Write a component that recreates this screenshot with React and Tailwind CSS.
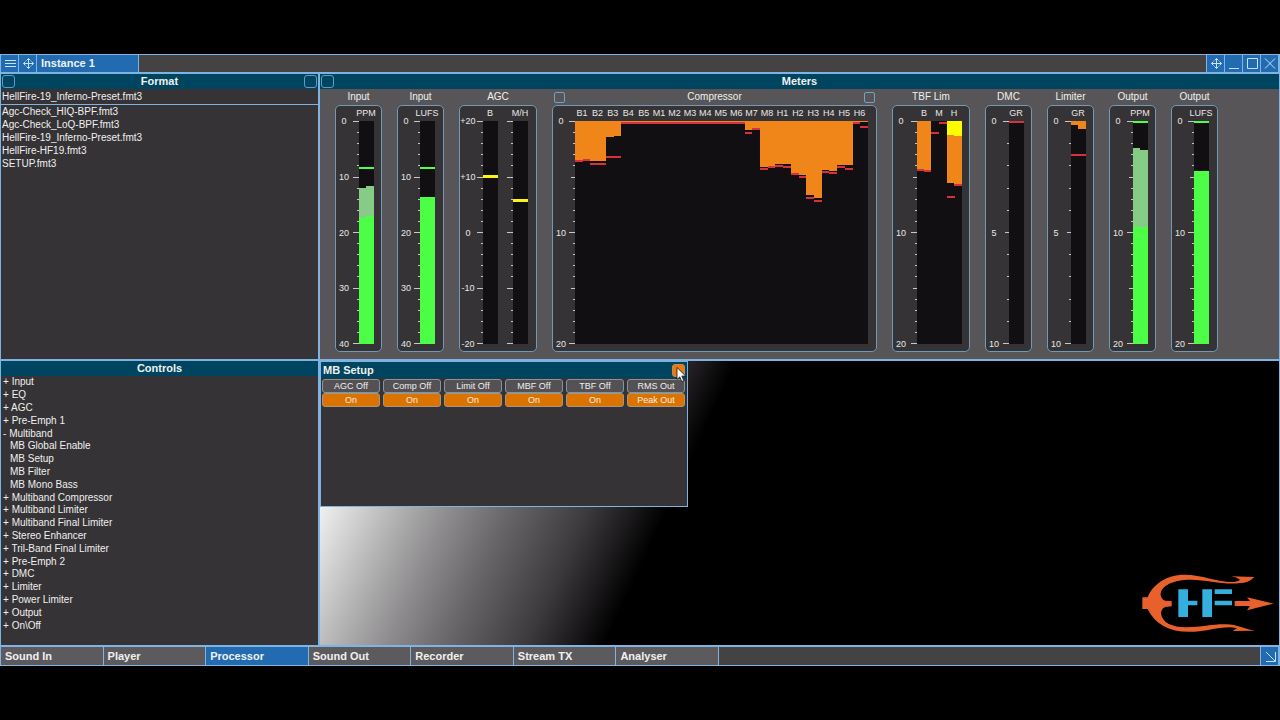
import React, { useState } from "react";

const ORANGE = "#f08519";
const RED = "#d8303c";
const GREEN = "#4cff46";
const PALE = "#86cc86";
const YELLOW = "#fdf31c";

const files = [
  "Agc-Check_HIQ-BPF.fmt3",
  "Agc-Check_LoQ-BPF.fmt3",
  "HellFire-19_Inferno-Preset.fmt3",
  "HellFire-HF19.fmt3",
  "SETUP.fmt3",
];

const controls = [
  { sign: "+", name: "Input" },
  { sign: "+", name: "EQ" },
  { sign: "+", name: "AGC" },
  { sign: "+", name: "Pre-Emph 1" },
  { sign: "-", name: "Multiband" },
  { name: "MB Global Enable" },
  { name: "MB Setup" },
  { name: "MB Filter" },
  { name: "MB Mono Bass" },
  { sign: "+", name: "Multiband Compressor" },
  { sign: "+", name: "Multiband Limiter" },
  { sign: "+", name: "Multiband Final Limiter" },
  { sign: "+", name: "Stereo Enhancer" },
  { sign: "+", name: "Tril-Band Final Limiter" },
  { sign: "+", name: "Pre-Emph 2" },
  { sign: "+", name: "DMC" },
  { sign: "+", name: "Limiter" },
  { sign: "+", name: "Power Limiter" },
  { sign: "+", name: "Output" },
  { sign: "+", name: "On\\Off" },
];

const tabs = ["Sound In", "Player", "Processor", "Sound Out", "Recorder", "Stream TX", "Analyser"];

const switches = [
  ["AGC Off", "On"],
  ["Comp Off", "On"],
  ["Limit Off", "On"],
  ["MBF Off", "On"],
  ["TBF Off", "On"],
  ["RMS Out", "Peak Out"],
];

// gain reduction and peak hold for the left and right channel of each band
const bands = [
  ["B1", 39, 39, 38, 38],
  ["B2", 40, 42, 40, 42],
  ["B3", 16, 35, 15, 35],
  ["B4", 1, 1, 1, 1],
  ["B5", 1, 1, 1, 1],
  ["M1", 1, 1, 1, 1],
  ["M2", 1, 1, 1, 1],
  ["M3", 1, 1, 1, 1],
  ["M4", 1, 1, 1, 1],
  ["M5", 1, 1, 1, 1],
  ["M6", 1, 1, 1, 1],
  ["M7", 9, 11, 7, 7],
  ["M8", 46, 47, 45, 45],
  ["H1", 43, 44, 43, 45],
  ["H2", 52, 52, 54, 55],
  ["H3", 74, 76, 77, 79],
  ["H4", 49, 50, 50, 51],
  ["H5", 44, 45, 44, 47],
  ["H6", 1, 1, 1, 5],
];
const BAND = 293 / 19;

const compressorBars = bands.flatMap(([, l, lPeak, r, rPeak], i) => [
  [i * BAND, 0, BAND / 2, l, ORANGE],
  [i * BAND + BAND / 2, 0, BAND / 2, r, ORANGE],
  [i * BAND, lPeak, BAND / 2, 2, RED],
  [i * BAND + BAND / 2, rPeak, BAND / 2, 2, RED],
]);

// bars: [x, y, width, height, colour], measured from the plot's top left corner
const meters = [
  {
    title: "Input", width: 47, scale: ["0", "10", "20", "30", "40"],
    plots: [{
      x: 23, width: 15, labels: [["PPM", 7]],
      bars: [[0, 46, 15, 2, GREEN], [0, 67, 7, 156, PALE], [7, 65, 8, 158, PALE], [0, 97, 7, 126, GREEN], [7, 95, 8, 128, GREEN]],
    }],
  },
  {
    title: "Input", width: 47, scale: ["0", "10", "20", "30", "40"],
    plots: [{ x: 22, width: 15, labels: [["LUFS", 7]], bars: [[0, 46, 15, 2, GREEN], [0, 76, 15, 147, GREEN]] }],
  },
  {
    title: "AGC", width: 78, scale: ["+20", "+10", "0", "-10", "-20"],
    plots: [
      { x: 23, width: 15, labels: [["B", 7]], bars: [[0, 54, 15, 3, YELLOW]] },
      { x: 53, width: 15, labels: [["M/H", 7]], bars: [[0, 78, 15, 3, YELLOW]] },
    ],
  },
  {
    title: "Compressor", width: 325, scale: ["0", "10", "20"], boxes: true,
    plots: [{
      x: 22, width: 293,
      labels: bands.map(([name], i) => [name, i * BAND + 7]),
      bars: compressorBars,
    }],
  },
  {
    title: "TBF Lim", width: 78, scale: ["0", "10", "20"],
    plots: [{
      x: 24, width: 45, labels: [["B", 7], ["M", 22], ["H", 37]],
      bars: [
        [0, 0, 7, 48, ORANGE], [7, 0, 7, 49, ORANGE], [0, 48, 7, 2, RED], [7, 49, 7, 2, RED],
        [14, 11, 8, 2, RED], [22, 1, 8, 2, RED],
        [30, 0, 7, 62, ORANGE], [37, 0, 8, 63, ORANGE], [30, 0, 7, 14, "#fdfd00"], [37, 0, 8, 15, "#fdfd00"],
        [37, 63, 8, 2, RED], [30, 75, 8, 2, RED],
      ],
    }],
  },
  {
    title: "DMC", width: 47, scale: ["0", "5", "10"], steps: 10,
    plots: [{ x: 23, width: 15, labels: [["GR", 7]], bars: [[0, 0, 15, 2, RED]] }],
  },
  {
    title: "Limiter", width: 47, scale: ["0", "5", "10"], steps: 10,
    plots: [{
      x: 23, width: 15, labels: [["GR", 7]],
      bars: [[0, 0, 7, 4, ORANGE], [7, 0, 8, 8, ORANGE], [0, 33, 15, 2, RED]],
    }],
  },
  {
    title: "Output", width: 47, scale: ["0", "10", "20"],
    plots: [{
      x: 23, width: 15, labels: [["PPM", 7]],
      bars: [[0, 0, 15, 2, GREEN], [0, 27, 7, 196, PALE], [7, 29, 8, 194, PALE], [0, 106, 15, 117, GREEN]],
    }],
  },
  {
    title: "Output", width: 47, scale: ["0", "10", "20"],
    plots: [{ x: 22, width: 15, labels: [["LUFS", 7]], bars: [[0, 0, 15, 2, GREEN], [0, 50, 15, 173, GREEN]] }],
  },
];

const TOP = 15;
const HEIGHT = 223;

function Meter({ title, width, scale, steps = 20, plots, boxes }) {
  const perLabel = steps / (scale.length - 1);
  const tickLength = (i) => {
    if (i % perLabel === 0) return steps === 10 && i === 5 ? 4 : 6;
    return steps === 20 && i % 5 === 0 ? 4 : 2;
  };

  return (
    <section className="flex shrink-0 flex-col" style={{ width }}>
      <div className="flex h-4 items-center justify-between px-[2px]">
        {boxes && <SquareButton label="Previous" />}
        <h3 className="flex-1 text-center text-[10px] leading-none whitespace-nowrap">{title}</h3>
        {boxes && <SquareButton label="Next" />}
      </div>
      <div className="rounded-[5px] border border-[#7299b5] bg-[#353335]">
        <svg className="block" width={width - 2} height="245" fontSize="9" fill="#e8e8e8" textAnchor="middle">
          {scale.map((label, i) => (
            <text key={label} x="8" y={TOP + 3 + (i * HEIGHT) / (scale.length - 1)}>
              {label}
            </text>
          ))}
          {plots.map((plot) => (
            <g key={plot.x} transform={`translate(${plot.x} 0)`}>
              {plot.labels.map(([label, x]) => (
                <text key={label} x={x} y="10">
                  {label}
                </text>
              ))}
              {Array.from({ length: steps + 1 }, (_, i) => (
                <rect
                  key={i}
                  x={-tickLength(i)}
                  y={TOP + Math.round((i * (HEIGHT - 1)) / steps)}
                  width={tickLength(i)}
                  height="1"
                  fill="#c8c8c8"
                />
              ))}
              <rect y={TOP} width={plot.width} height={HEIGHT} fill="#110f12" />
              <g shapeRendering="crispEdges">
                {plot.bars.map(([x, y, w, h, fill], i) => (
                  <rect key={i} x={x} y={TOP + y} width={w} height={h} fill={fill} />
                ))}
              </g>
            </g>
          ))}
        </svg>
      </div>
    </section>
  );
}

function SquareButton({ label }) {
  return (
    <button aria-label={label} className="size-[11px] shrink-0 rounded-[2px] border border-[#6fa3c8]" />
  );
}

function PanelHeader({ title, left, right }) {
  return (
    <div className="flex h-[15px] items-center bg-[#00455f] px-px">
      <div className="flex w-[13px]">{left && <HeaderButton label={`${title} left`} />}</div>
      <h2 className="flex-1 text-center text-[11px] leading-none font-bold">{title}</h2>
      <div className="flex w-[13px]">{right && <HeaderButton label={`${title} right`} />}</div>
    </div>
  );
}

function HeaderButton({ label }) {
  return <button aria-label={label} className="size-[13px] rounded-[3px] border border-[#5c9cc4]" />;
}

function BarButton({ label, children }) {
  return (
    <button
      aria-label={label}
      className="flex w-[18px] items-center justify-center border-r border-[#7fb4e2] bg-[#236bb1] text-[#c4e2fa]"
    >
      <svg className="h-[17px] w-4" viewBox="0 0 16 17" fill="none" stroke="currentColor">
        {children}
      </svg>
    </button>
  );
}

function MoveIcon() {
  return (
    <path d="M8.500 3.500v10M3.500 8.500h10M6.500 5.500l2-2 2 2M6.500 11.500l2 2 2-2M5.500 6.500l-2 2 2 2M11.500 6.500l2 2-2 2" />
  );
}

function MbSetup() {
  const [on, setOn] = useState(switches.map(() => true));

  const select = (index, value) => {
    setOn(on.map((v, i) => (i === index ? value : v)));
  };

  return (
    <section className="relative h-[146px] w-[368px] border border-[#7fb4e2] bg-[#353335]">
      <div className="flex h-4 items-center justify-between bg-[#00455f] px-[2px]">
        <h2 className="text-[11px] leading-none font-bold">MB Setup</h2>
        <button aria-label="Close" className="size-[13px] rounded-[3px] border border-[#c48a50] bg-[#e87a10]" />
      </div>
      <div className="grid grid-cols-6 gap-x-[3px] pt-px pr-[2px] pl-px">
        {switches.map(([off, onLabel], i) => (
          <div key={off} className="flex flex-col text-[9px] leading-none">
            <button
              className={`h-[14px] rounded-[3px] border border-[#7c97aa] ${on[i] ? "bg-[#535153]" : "bg-[#db7300]"}`}
              onClick={() => select(i, false)}
            >
              {off}
            </button>
            <button
              className={`h-[14px] rounded-[3px] border border-[#a8967c] ${on[i] ? "bg-[#db7300]" : "bg-[#535153]"}`}
              onClick={() => select(i, true)}
            >
              {onLabel}
            </button>
          </div>
        ))}
      </div>
      <svg className="absolute top-[5px] right-0 h-[16px] w-[11px]" viewBox="0 0 11 16">
        <path d="M1 .5v12l2.800-2.600 2 4.600 2-.9-2-4.500h3.900z" fill="#fff" stroke="#111" strokeWidth=".8" />
      </svg>
    </section>
  );
}

function Logo() {
  return (
    <svg className="mt-auto mr-px mb-[7px] h-[70px] w-[142px] self-end" viewBox="0 0 426 210" role="img" aria-label="HF">
      <g fill="#e8602c">
        <path d="M19 88H35C50 50 90 20 145 20C200 20 240 42 290 42Q306 41 312 35Q302 28 286 25L355 27Q338 45 312 45C270 52 215 36 165 35C120 34 74 50 74 80Q76 94 88 98L107 99V115L88 117Q75 122 75 136C78 165 110 178 150 178C200 177 230 168 270 169C305 169 325 184 357 188L290 189L303 181C270 172 230 186 190 190C110 198 60 175 35 123H19Z" />
        <path d="M296 99H342L333 88L413 107L333 127L342 114H296Z" />
      </g>
      <g fill="#35b0de">
        <path d="M127 64h29v83h-29zM156 98h28v14h-28zM199 64h29v83h-29zM236 64h52v14h-52zM236 98h52v14h-52z" />
      </g>
    </svg>
  );
}

export default function App() {
  const [activeTab, setActiveTab] = useState("Processor");

  return (
    <div className="flex min-h-screen flex-col justify-center bg-black font-['Liberation_Sans',Arial,sans-serif] text-[#f0f0f0]">
      <main className="border border-[#7fb4e2] bg-[#353335]">
        {/* title bar */}
        <header className="flex h-[17px] bg-[#454244]">
          <BarButton label="Menu">
            <path d="M3 5.500h11M3 8.500h11M3 11.500h11" />
          </BarButton>
          <BarButton label="Move instance">
            <MoveIcon />
          </BarButton>
          <button className="w-[102px] border-r border-[#7fb4e2] bg-[#236bb1] px-1 text-left text-[11px] leading-none font-bold">
            Instance 1
          </button>
          <div className="ml-auto flex border-l border-[#7fb4e2]">
            <BarButton label="Move">
              <MoveIcon />
            </BarButton>
            <BarButton label="Minimise">
              <path d="M3 13.500h10" />
            </BarButton>
            <BarButton label="Maximise">
              <path d="M3.500 3.500h10v10h-10z" />
            </BarButton>
            <BarButton label="Close">
              <path d="m3 3.500 10 10M13 3.500l-10 10" />
            </BarButton>
          </div>
        </header>

        <div className="grid grid-cols-[319px_1fr] border-t-2 border-[#7fb4e2]">
          {/* format list */}
          <section className="border-r-2 border-[#7fb4e2]">
            <PanelHeader title="Format" left right />
            <p className="h-4 border-b border-[#7fb4e2] px-px text-[10px] leading-4">HellFire-19_Inferno-Preset.fmt3</p>
            <ul>
              {files.map((file) => (
                <li key={file} className="px-px text-[10px] leading-[13px]">
                  {file}
                </li>
              ))}
            </ul>
          </section>

          <section className="bg-[#575557]">
            <PanelHeader title="Meters" left />
            <div className="flex gap-[15px] pb-[7px] pl-[15px]">
              {meters.map((meter, i) => (
                <Meter key={i} {...meter} />
              ))}
            </div>
          </section>

          {/* controls tree */}
          <section className="border-t-2 border-r-2 border-[#7fb4e2]">
            <PanelHeader title="Controls" />
            <ul className="flex h-64 flex-col px-[2px] text-[10px] leading-none">
              {controls.map(({ sign, name }) => (
                <li key={name} className="flex flex-1 items-center">
                  {sign ? (
                    <button>
                      {sign} {name}
                    </button>
                  ) : (
                    <button className="pl-[7px]">{name}</button>
                  )}
                </li>
              ))}
            </ul>
          </section>

          <section className="flex min-h-[286px] flex-col border-t-2 border-[#7fb4e2] bg-[linear-gradient(115deg,#fff_30px,#f0f0f0_62px,#bcbcbc_122px,#8e8c8e_180px,#686668_234px,#3c3a3c_306px,#1c1a1c_346px,#000_378px)]">
            <MbSetup />
            <Logo />
          </section>
        </div>

        {/* page tabs */}
        <footer className="flex h-5 justify-between border-t-2 border-[#7fb4e2] bg-[#454244]">
          <nav className="grid w-[718px] grid-cols-7">
            {tabs.map((tab) => (
              <button
                key={tab}
                className={`border-r border-[#7fb4e2] px-1 text-left text-[11px] leading-none font-bold ${
                  tab === activeTab ? "bg-[#236bb1]" : "bg-[#5c5a5c]"
                }`}
                onClick={() => setActiveTab(tab)}
              >
                {tab}
              </button>
            ))}
          </nav>
          <div className="flex border-l border-[#7fb4e2]">
            <BarButton label="Resize">
              <path d="m4 4 9 9M13.500 4v9.500H4" />
            </BarButton>
          </div>
        </footer>
      </main>
    </div>
  );
}
